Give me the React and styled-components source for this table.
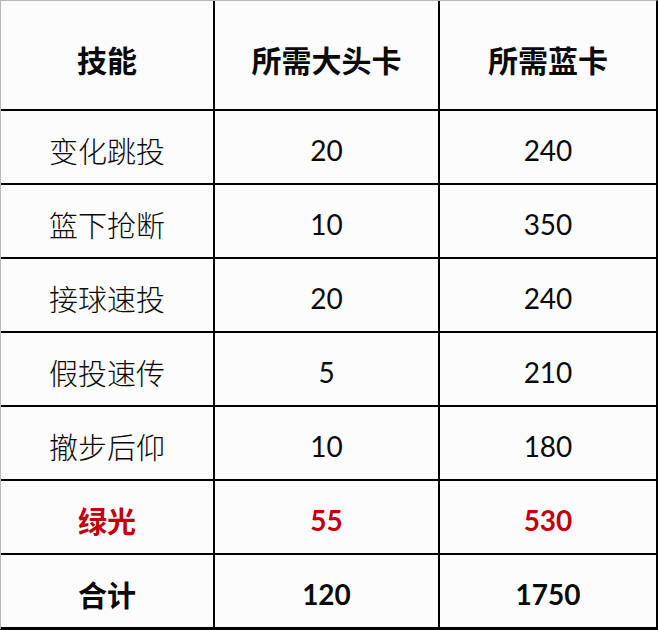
import React from "react";
import styled, { createGlobalStyle } from "styled-components";

const Global = createGlobalStyle`
  html, body { margin: 0; padding: 0; background: #fdfcfd; }
  body { font-family: "Noto Sans CJK SC", "Noto Sans", sans-serif; }
`;

const Table = styled.div`
  width: 658px;
  height: 630px;
  box-sizing: border-box;
  display: grid;
  grid-template-columns: 212px 223px 216px;
  grid-template-rows: 108px repeat(7, 72px);
  column-gap: 2px;
  row-gap: 2px;
  background: #000;
  border-left: 1px solid #b8b8b8;
  border-top: 1px solid #b8b8b8;
  border-right: 2px solid #000;
  border-bottom: 2px solid #000;
`;

const Cell = styled.div`
  background: #fdfcfd;
  display: flex;
  align-items: center;
  justify-content: center;
  padding-top: ${(p) => (p.$head ? 8 : 6)}px;
  box-sizing: border-box;
  font-family: ${(p) =>
    p.$num ? `"Lato", "Noto Sans CJK SC", sans-serif` : `"Noto Sans CJK SC", sans-serif`};
  font-size: ${(p) => (p.$num ? 28 : p.$head ? 30 : 29)}px;
  font-weight: ${(p) => (p.$bold ? 700 : p.$num ? 400 : 300)};
  color: ${(p) => (p.$red ? "#c0000a" : "#0a0a0a")};
  line-height: 1;
`;

const header = ["技能", "所需大头卡", "所需蓝卡"];
const rows = [
  ["变化跳投", "20", "240"],
  ["篮下抢断", "10", "350"],
  ["接球速投", "20", "240"],
  ["假投速传", "5", "210"],
  ["撤步后仰", "10", "180"],
  ["绿光", "55", "530", "red"],
  ["合计", "120", "1750", "total"],
];

export default function App() {
  return (
    <>
      <Global />
      <Table>
        {header.map((h) => (
          <Cell key={h} $head $bold>
            {h}
          </Cell>
        ))}
        {rows.map(([name, a, b, kind]) => {
          const red = kind === "red";
          const bold = kind === "red" || kind === "total";
          return (
            <React.Fragment key={name}>
              <Cell $red={red} $bold={bold}>{name}</Cell>
              <Cell $num $red={red} $bold={bold}>{a}</Cell>
              <Cell $num $red={red} $bold={bold}>{b}</Cell>
            </React.Fragment>
          );
        })}
      </Table>
    </>
  );
}
